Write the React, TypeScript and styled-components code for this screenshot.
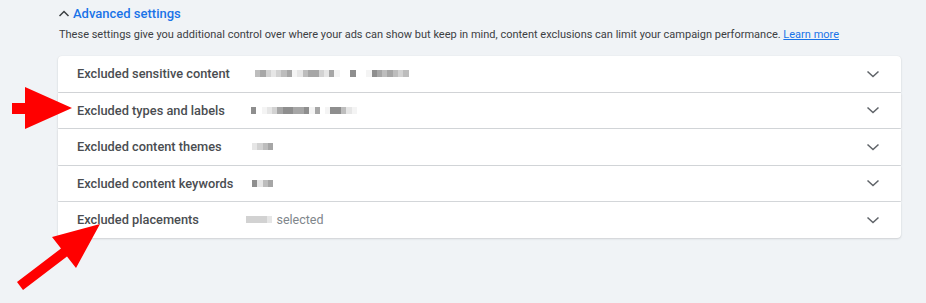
import React from 'react';
import styled, {createGlobalStyle} from 'styled-components';

const GlobalStyle = createGlobalStyle`
  html, body {
    margin: 0;
    padding: 0;
    background: #f0f3f6;
    font-family: Roboto, "Liberation Sans", Arial, sans-serif;
  }
`;

const Page = styled.div`
  position: relative;
  width: 926px;
  height: 303px;
  padding: 4px 25px 0 58px;
  box-sizing: border-box;
  overflow: hidden;
`;

const Toggle = styled.button`
  display: flex;
  align-items: center;
  gap: 3px;
  padding: 0;
  margin: 0;
  border: none;
  background: none;
  font-family: inherit;
  font-size: 13px;
  font-weight: 500;
  color: #1a73e8;
  height: 19px;
  cursor: pointer;
`;

const Description = styled.p`
  margin: 4px 0 0 1px;
  font-size: 11px;
  line-height: 16px;
  color: #3c4043;
`;

const Link = styled.a`
  color: #1a73e8;
  text-decoration: underline;
`;

const Panel = styled.div`
  margin-top: 13px;
  display: flex;
  flex-direction: column;
  gap: 1px;
`;

const Row = styled.div<{$first?: boolean; $last?: boolean}>`
  display: grid;
  grid-template-columns: 173px 1fr 24px;
  align-items: center;
  height: 35.5px;
  padding: 0 11px 0 19px;
  background: #fff;
  border-radius: ${p => (p.$first ? '4px 4px 0 0' : p.$last ? '0 0 4px 4px' : '0')};
  box-shadow: 0 1px 2px rgba(60, 64, 67, 0.18), 0 0 1px rgba(60, 64, 67, 0.1);
`;

const Label = styled.span`
  font-size: 12.8px;
  font-weight: 500;
  color: #4a4d51;
  white-space: nowrap;
`;

const Value = styled.span<{$shift?: number}>`
  display: flex;
  align-items: center;
  margin-left: ${p => p.$shift ?? 0}px;
  font-size: 12.5px;
  color: #80868b;
  gap: 4px;
`;

const Blur = styled.span`
  display: flex;
  height: 7px;
`;

const Cell = styled.span<{$shade: string}>`
  width: 5.3px;
  height: 7px;
  background: ${p => p.$shade};
`;

const Arrows = styled.svg`
  position: absolute;
  left: 0;
  top: 0;
  pointer-events: none;
`;

const ChevronUp = () => (
  <svg width="12" height="12" viewBox="0 0 12 12">
    <path d="M1.5 8 L6 3.5 L10.5 8" fill="none" stroke="#3c4043" strokeWidth="1.5" />
  </svg>
);

const ChevronDown = () => (
  <svg width="14" height="10" viewBox="0 0 14 10">
    <path d="M1.5 2.5 L7 7.5 L12.5 2.5" fill="none" stroke="#5f6368" strokeWidth="1.5" />
  </svg>
);

// redacted text is shown as pixel blocks, one letter per shade
const shades: Record<string, string> = {
  a: '#8e8e8e',
  b: '#a6a6a6',
  c: '#bdbdbd',
  d: '#d2d2d2',
  e: '#e6e6e6',
  f: '#f4f4f4',
  _: 'transparent',
};

const Pixels = ({pattern}: {pattern: string}) => (
  <Blur>
    {pattern.split('').map((ch, i) => (
      <Cell key={i} $shade={shades[ch]} />
    ))}
  </Blur>
);

const rows = [
  {label: 'Excluded sensitive content', pattern: 'cbdedcbfecbbdebf__a__fabcbcdc', shift: 5},
  {label: 'Excluded types and labels', pattern: 'a_fedbaabbafb_faacef', shift: 1},
  {label: 'Excluded content themes', pattern: 'edcb', shift: 2},
  {label: 'Excluded content keywords', pattern: 'aecb', shift: 2},
];

const App: React.FC = () => {
  return (
    <Page>
      <GlobalStyle />
      <Toggle>
        <ChevronUp />
        Advanced settings
      </Toggle>
      <Description>
        These settings give you additional control over where your ads can show but keep in mind, content exclusions can limit your campaign performance. <Link>Learn more</Link>
      </Description>
      <Panel>
        {rows.map((r, i) => (
          <Row key={r.label} $first={i === 0}>
            <Label>{r.label}</Label>
            <Value $shift={r.shift}>
              <Pixels pattern={r.pattern} />
            </Value>
            <ChevronDown />
          </Row>
        ))}
        <Row $last>
          <Label>Excluded placements</Label>
          <Value $shift={-4}>
            <Pixels pattern="dddde" />
            selected
          </Value>
          <ChevronDown />
        </Row>
      </Panel>
      <Arrows width="926" height="303" viewBox="0 0 926 303">
        <polygon points="72,108 25,87 25,103 12,103 12,114 25,114 25,129" fill="#ff0000" />
        <polygon points="100,224 52,237 61,248.5 17,282 23,290 67,256.5 76,268" fill="#ff0000" />
      </Arrows>
    </Page>
  );
};

export default App;
